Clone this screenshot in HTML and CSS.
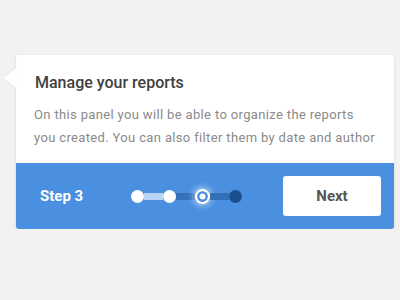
FILE: index.html
```html
<!DOCTYPE html>
<html lang="en">
<head>
    <meta charset="UTF-8">
    <title>Manage your reports</title>
    <link rel="stylesheet" href="styles.css">
</head>
<body>
    <div class="tour-card">
        <div class="tour-body">
            <h2>Manage your reports</h2>
            <p>On this panel you will be able to organize the reports<br>you created. You can also filter them by date and author</p>
        </div>
        <div class="tour-footer">
            <span class="step-label">Step 3</span>
            <div class="stepper">
                <span class="dot done"></span>
                <span class="bar done"></span>
                <span class="dot done"></span>
                <span class="bar"></span>
                <span class="dot current"></span>
                <span class="bar"></span>
                <span class="dot"></span>
            </div>
            <button class="next-btn">Next</button>
        </div>
    </div>
</body>
</html>
```

FILE: styles.css
```css
body {
    margin: 0;
    padding: 55px 6px 0 16px;
    background-color: #f2f2f2;
    font-family: 'Roboto', sans-serif;
}

.tour-card {
    position: relative;
    width: 378px;
    background-color: #ffffff;
    border-radius: 3px;
    box-shadow: 0 1px 3px rgba(0, 0, 0, 0.12);
}

/* little pointer on the left side */
.tour-card::before {
    content: "";
    position: absolute;
    left: -13px;
    top: 13px;
    border-top: 10px solid transparent;
    border-bottom: 10px solid transparent;
    border-right: 13px solid #ffffff;
    filter: drop-shadow(-1px 0 1px rgba(0, 0, 0, 0.06));
}

.tour-body {
    padding: 18px 8px 14px 18px;
}

h2 {
    margin: 0 0 10px 1px;
    font-size: 16px;
    line-height: 20px;
    font-weight: 500;
    color: #404040;
}

p {
    margin: 0;
    font-size: 13px;
    line-height: 23px;
    letter-spacing: 0.35px;
    white-space: nowrap;
    color: #8a8a8a;
}

.tour-footer {
    display: flex;
    align-items: center;
    height: 66px;
    padding: 0 13px 0 24px;
    background-color: #4a8fe0;
    border-radius: 0 0 3px 3px;
}

.step-label {
    width: 91px;
    font-size: 15px;
    font-weight: 700;
    color: #ffffff;
}

.stepper {
    display: flex;
    align-items: center;
}

.dot {
    width: 13px;
    height: 13px;
    border-radius: 50%;
    background-color: #1c4f8f;
}

.dot.done {
    background-color: #ffffff;
}

.dot.current {
    box-sizing: border-box;
    width: 15px;
    height: 15px;
    border: 2px solid #ffffff;
    background-color: #ffffff;
    box-shadow: inset 0 0 0 2.5px #4a8fe0, 0 0 6px 2px rgba(255, 255, 255, 0.55);
}

.bar {
    width: 19px;
    height: 7px;
    background-color: #3470b8;
}

.bar.done {
    background-color: #b9d4f4;
}

.next-btn {
    margin-left: auto;
    width: 98px;
    height: 40px;
    border: none;
    border-radius: 3px;
    background-color: #ffffff;
    font-family: 'Roboto', sans-serif;
    font-size: 15px;
    font-weight: 700;
    color: #555555;
}
```
